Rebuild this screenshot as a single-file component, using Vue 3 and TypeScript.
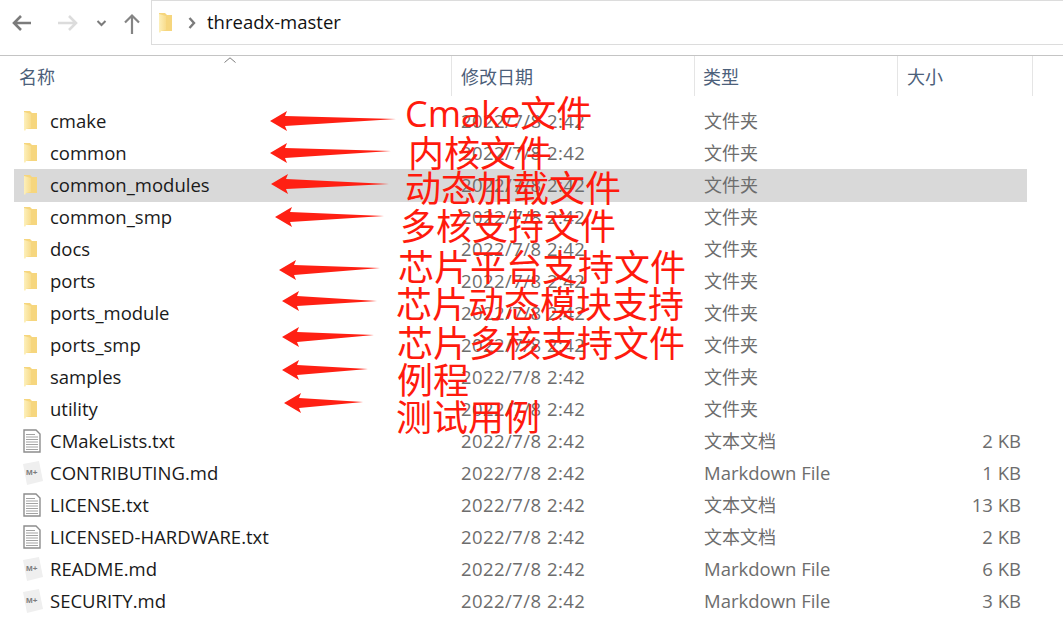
<script setup lang="ts">
type Row = {
  name: string
  date: string
  type: string
  size: string
  icon: 'folder' | 'text' | 'md'
  selected?: boolean
}

const folderDate = '2022/7/8 2:42'

const folders = ['cmake', 'common', 'common_modules', 'common_smp', 'docs', 'ports', 'ports_module', 'ports_smp', 'samples', 'utility']

const rows: Row[] = [
  ...folders.map((name): Row => ({
    name,
    date: folderDate,
    type: '文件夹',
    size: '',
    icon: 'folder',
    selected: name === 'common_modules',
  })),
  { name: 'CMakeLists.txt', date: folderDate, type: '文本文档', size: '2 KB', icon: 'text' },
  { name: 'CONTRIBUTING.md', date: folderDate, type: 'Markdown File', size: '1 KB', icon: 'md' },
  { name: 'LICENSE.txt', date: folderDate, type: '文本文档', size: '13 KB', icon: 'text' },
  { name: 'LICENSED-HARDWARE.txt', date: folderDate, type: '文本文档', size: '2 KB', icon: 'text' },
  { name: 'README.md', date: folderDate, type: 'Markdown File', size: '6 KB', icon: 'md' },
  { name: 'SECURITY.md', date: folderDate, type: 'Markdown File', size: '3 KB', icon: 'md' },
]

// red annotations drawn over the list
const notes = [
  { text: 'Cmake文件', x: 405, y: 114 },
  { text: '内核文件', x: 408, y: 154 },
  { text: '动态加载文件', x: 405, y: 189 },
  { text: '多核支持文件', x: 400, y: 227 },
  { text: '芯片平台支持文件', x: 398, y: 268 },
  { text: '芯片动态模块支持', x: 396, y: 305 },
  { text: '芯片多核支持文件', x: 397, y: 344 },
  { text: '例程', x: 397, y: 381 },
  { text: '测试用例', x: 396, y: 418 },
]

const arrows = [
  [270, 121, 396, 119],
  [270, 153, 391, 151],
  [271, 184, 389, 184],
  [275, 217, 384, 216],
  [279, 270, 380, 268],
  [282, 301, 377, 301],
  [282, 337, 374, 335],
  [282, 370, 368, 369],
  [284, 403, 363, 402],
]

const arrowPoints = (a: number[]) => {
  const [x, y, tx, ty] = a
  return [
    `${x},${y}`,
    `${x + 17},${y - 10}`,
    `${x + 15},${y - 5}`,
    `${tx},${ty}`,
    `${x + 15},${y + 5}`,
    `${x + 17},${y + 10}`,
  ].join(' ')
}
</script>

<template>
  <div class="window">
    <div class="toolbar">
      <div class="nav">
        <svg width="151" height="45" viewBox="0 0 151 45" fill="none">
          <path d="M31 23H14M21 16l-7 7 7 7" stroke="#7b7b7b" stroke-width="2.6" />
          <path d="M58 23h18M69 16l7 7-7 7" stroke="#dcdcdc" stroke-width="2.6" />
          <path d="M97.5 21l4 4 4-4" stroke="#7b7b7b" stroke-width="2" />
          <path d="M132 34V16M125 22.5l7-7 7 7" stroke="#848484" stroke-width="2.2" />
        </svg>
      </div>
      <div class="address">
        <svg class="address-folder" width="16" height="22" viewBox="0 0 16 22">
          <defs>
            <linearGradient id="addr" x1="0" y1="0" x2="1" y2="0">
              <stop offset="0" stop-color="#fdf0bb" />
              <stop offset="1" stop-color="#f8dc8c" />
            </linearGradient>
          </defs>
          <path d="M2 1h6l2 2h5v16H2z" fill="#f6d67e" />
          <path d="M2 2l7 2v14l-5 1-1 2-1-1z" fill="url(#addr)" />
        </svg>
        <svg class="address-sep" width="8" height="12" viewBox="0 0 8 12" fill="none">
          <path d="M1.5 1l4.5 5-4.5 5" stroke="#7b7b7b" stroke-width="2.4" />
        </svg>
        <span class="address-text">threadx-master</span>
      </div>
    </div>

    <div class="header">
      <div class="col col-name">名称</div>
      <div class="col col-date">修改日期</div>
      <div class="col col-type">类型</div>
      <div class="col col-size">大小</div>
      <svg class="sort" width="12" height="6" viewBox="0 0 12 6" fill="none">
        <path d="M.5 5.5L6 .8l5.5 4.7" stroke="#7d7d7d" />
      </svg>
    </div>

    <div class="list">
      <div v-for="row in rows" :key="row.name" class="row" :class="{ selected: row.selected }">
        <div class="cell-name">
          <svg v-if="row.icon === 'folder'" class="icon icon-folder" width="16" height="22" viewBox="0 0 16 22">
            <defs>
              <linearGradient id="fold" x1="0" y1="0" x2="1" y2="0">
                <stop offset="0" stop-color="#fdf0bb" />
                <stop offset="1" stop-color="#f8dc8c" />
              </linearGradient>
            </defs>
            <path d="M2 1h6l2 2h5v16H2z" fill="#f6d67e" />
            <path d="M2 2l7 2v14l-5 1-1 2-1-1z" fill="url(#fold)" />
          </svg>
          <svg v-else-if="row.icon === 'text'" class="icon icon-text" width="18" height="24" viewBox="0 0 18 24" fill="none">
            <path d="M1 1h12l4 4v18H1z" fill="#fff" stroke="#8d8d8d" stroke-width="1.4" />
            <path d="M3 5.5h9M3 8h12M3 10.5h12M3 13h12M3 15.5h12M3 18h12M3 20.5h12" stroke="#a3a3a3" />
          </svg>
          <svg v-else class="icon icon-md" width="22" height="26" viewBox="0 0 22 26">
            <path d="M1 4l16-3 4 20-16 4z" fill="#efefef" />
            <text x="4" y="15" class="md-mark">M+</text>
          </svg>
          <span class="name">{{ row.name }}</span>
        </div>
        <div class="cell-date">{{ row.date }}</div>
        <div class="cell-type" :class="{ cjk: row.type !== 'Markdown File' }">{{ row.type }}</div>
        <div class="cell-size">{{ row.size }}</div>
      </div>
    </div>

    <svg class="arrows" width="1063" height="627" viewBox="0 0 1063 627">
      <polygon v-for="(a, i) in arrows" :key="i" :points="arrowPoints(a)" fill="#ff2013" />
    </svg>
    <span
      v-for="n in notes"
      :key="n.text"
      class="note"
      :style="{ left: n.x + 'px', top: n.y - 24 + 'px' }"
    >{{ n.text }}</span>
  </div>
</template>

<style scoped>
.window {
  position: relative;
  width: 1063px;
  height: 627px;
  overflow: hidden;
  background: #fff;
  font-family: "Open Sans", "Noto Sans CJK SC", sans-serif;
  font-size: 18.5px;
  color: #1a1a1a;
}

.toolbar {
  display: flex;
  height: 55px;
  border-bottom: 1px solid #c4c4c4;
  box-sizing: content-box;
}

.nav {
  width: 151px;
  height: 45px;
}

.nav svg {
  display: block;
}

.address {
  flex: 1;
  height: 45px;
  box-sizing: border-box;
  display: flex;
  align-items: center;
  border: 1px solid #dcdcdc;
  border-right: none;
  padding-left: 5px;
}

.address-folder {
  flex: none;
}

.address-sep {
  flex: none;
  margin-left: 15px;
}

.address-text {
  margin-left: 11px;
  margin-bottom: 2px;
  color: #111;
}

.header {
  position: relative;
  display: grid;
  grid-template-columns: 452px 243px 203px 135px;
  height: 40px;
  color: #4c607a;
  font-size: 18px;
}

.col {
  display: flex;
  align-items: center;
  height: 40px;
  box-sizing: border-box;
  border-right: 1px solid #e5e5e5;
}

.col-name {
  padding-left: 19px;
}

.col-date,
.col-size {
  padding-left: 9px;
}

.col-type {
  padding-left: 8px;
}

.sort {
  position: absolute;
  left: 224px;
  top: 1px;
}

.list {
  margin-top: 9px;
  margin-left: 14px;
  width: 1013px;
}

.row {
  display: grid;
  grid-template-columns: 447px 243px 202px 115px;
  height: 32px;
  align-items: center;
  white-space: nowrap;
}

.row.selected {
  background: #d9d9d9;
  box-shadow: 0 1px 0 #d9d9d9;
}

.cell-name {
  display: flex;
  align-items: center;
  position: relative;
  padding-left: 36px;
}

.name,
.cell-date,
.cell-type,
.cell-size {
  margin-bottom: 2px;
}

.icon {
  position: absolute;
  top: 50%;
  transform: translateY(-50%);
}

.icon-folder {
  left: 8px;
}

.icon-text {
  left: 9px;
}

.icon-md {
  left: 8px;
}

.md-mark {
  font-size: 8px;
  font-weight: 700;
  fill: #7d7d7d;
  font-family: "Liberation Sans", sans-serif;
}

.cell-date,
.cell-type,
.cell-size {
  color: #6d6d6d;
}

.cell-date {
  letter-spacing: 0.45px;
}

.cell-type.cjk {
  font-size: 18px;
}

.cell-size {
  text-align: right;
}

.arrows {
  position: absolute;
  left: 0;
  top: 0;
  pointer-events: none;
}

.note {
  position: absolute;
  font-family: "Open Sans", "Noto Sans CJK SC", sans-serif;
  font-size: 36px;
  line-height: 48px;
  color: #ff1a0d;
  white-space: nowrap;
}
</style>
